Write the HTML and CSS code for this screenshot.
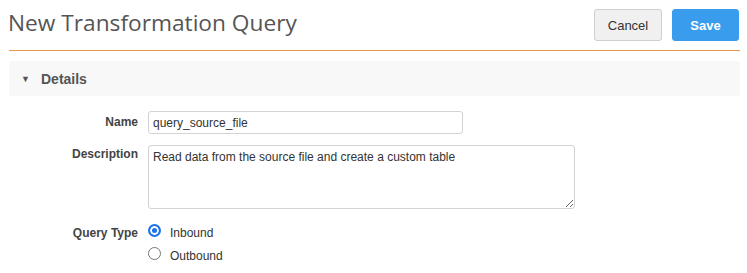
FILE: index.html
```html
<!DOCTYPE html>
<html>
<head>
<meta charset="utf-8">
<link rel="stylesheet" href="styles.css">
</head>
<body>
<div class="page">
  <div class="header">
    <h1 class="title">New Transformation Query</h1>
    <div class="actions">
      <button class="btn btn-cancel">Cancel</button>
      <button class="btn btn-save">Save</button>
    </div>
  </div>
  <div class="section-bar">
    <span class="caret">&#9660;</span>
    <span class="section-title">Details</span>
  </div>
  <div class="form">
    <div class="row row-name">
      <label class="label">Name</label>
      <input class="input" type="text" value="query_source_file">
    </div>
    <div class="row row-desc">
      <label class="label">Description</label>
      <textarea class="textarea">Read data from the source file and create a custom table</textarea>
    </div>
    <div class="row row-type">
      <label class="label">Query Type</label>
      <div class="radios">
        <label class="radio-item"><input class="radio" type="radio" name="qt" checked><span>Inbound</span></label>
        <label class="radio-item"><input class="radio" type="radio" name="qt"><span>Outbound</span></label>
      </div>
    </div>
  </div>
</div>
</body>
</html>
```

FILE: styles.css
```css
html, body {
  margin: 0;
  padding: 0;
  background: #fff;
}
body {
  font-family: "Liberation Sans", Arial, sans-serif;
  color: #333;
}
.page {
  padding: 0 7px 0 9px;
}
.header {
  display: flex;
  justify-content: space-between;
  align-items: flex-start;
  height: 51px;
  box-sizing: border-box;
  padding-top: 9px;
  border-bottom: 1px solid #e8994a;
}
.title {
  margin: 0;
  margin-left: -1px;
  font-family: "Open Sans", sans-serif;
  font-weight: 400;
  font-size: 22.7px;
  line-height: 28px;
  color: #555;
}
.actions {
  display: flex;
  gap: 10px;
  margin-right: 1px;
}
.btn {
  height: 32px;
  width: 68px;
  border-radius: 3px;
  font-family: "Liberation Sans", Arial, sans-serif;
  font-size: 13px;
  padding: 0;
  box-sizing: border-box;
}
.btn-cancel {
  background: #f0f0f0;
  border: 1px solid #cfcfcf;
  color: #333;
}
.btn-save {
  width: 67px;
  background: #3a9cec;
  border: 1px solid #3a9cec;
  color: #fff;
  font-weight: 700;
}
.section-bar {
  margin-top: 10px;
  height: 35px;
  background: #f8f8f8;
  display: flex;
  align-items: center;
  padding-left: 12px;
}
.caret {
  font-size: 9px;
  color: #555;
  width: 20px;
}
.section-title {
  font-weight: 700;
  font-size: 14px;
  color: #555;
}
.form {
  padding-top: 15px;
}
.row {
  display: flex;
  align-items: flex-start;
  gap: 10px;
}
.label {
  width: 129px;
  text-align: right;
  font-weight: 700;
  font-size: 12px;
  color: #444;
}
.row-name .label {
  padding-top: 4px;
}
.input {
  width: 315px;
  height: 23px;
  box-sizing: border-box;
  border: 1px solid #d3d3d3;
  border-radius: 3px;
  padding: 0 4px;
  margin: 0;
  font-family: "Liberation Sans", Arial, sans-serif;
  font-size: 12px;
  color: #333;
}
.row-desc {
  margin-top: 11px;
}
.row-desc .label {
  padding-top: 2px;
}
.textarea {
  width: 427px;
  height: 64px;
  box-sizing: border-box;
  border: 1px solid #d3d3d3;
  border-radius: 3px;
  padding: 4px 4px;
  margin: 0;
  font-family: "Liberation Sans", Arial, sans-serif;
  font-size: 12px;
  color: #333;
  resize: both;
}
.row-type {
  margin-top: 14px;
}
.row-type .label {
  padding-top: 3px;
}
.radios {
  display: flex;
  flex-direction: column;
  gap: 8px;
}
.radio-item {
  display: flex;
  align-items: center;
  gap: 9px;
  font-size: 12px;
  color: #333;
  height: 15px;
}
.radio-item span {
  padding-top: 5px;
}
.radio {
  -webkit-appearance: none;
  appearance: none;
  margin: 0;
  width: 13px;
  height: 13px;
  border-radius: 50%;
  border: 1px solid #777;
  background: #fff;
  box-sizing: border-box;
}
.radio:checked {
  border: 2px solid #1a73e8;
  background: #1a73e8;
  box-shadow: inset 0 0 0 2px #fff;
}
```
